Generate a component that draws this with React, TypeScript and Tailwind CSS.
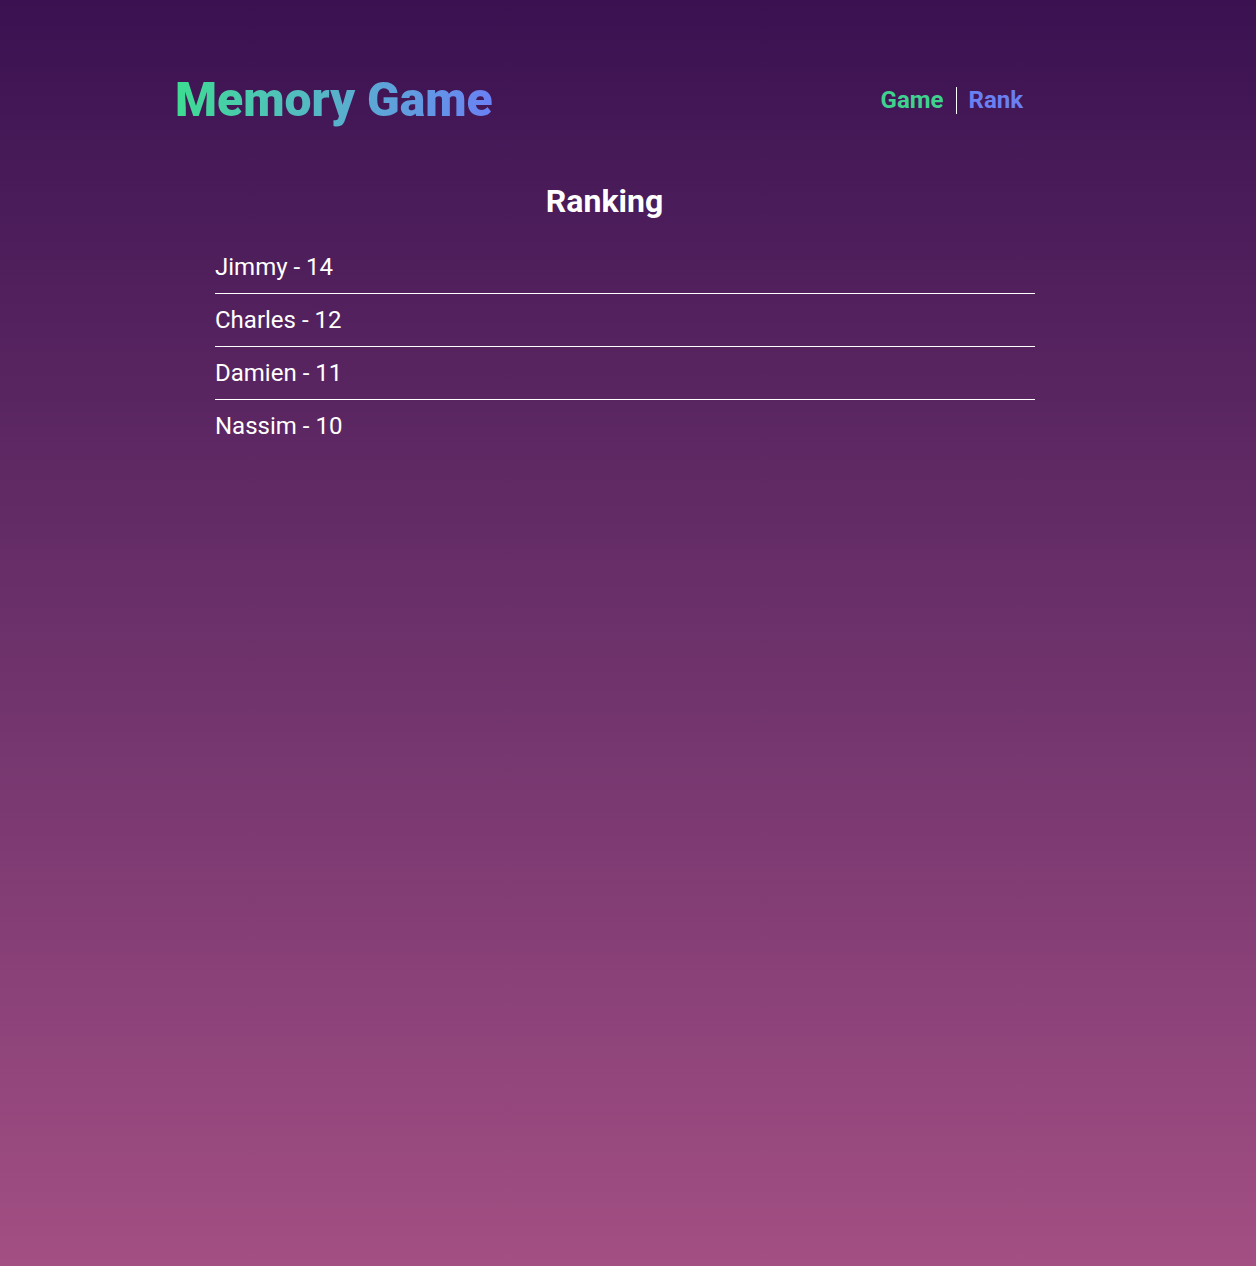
const scores = [
  { name: "Jimmy", score: 14 },
  { name: "Charles", score: 12 },
  { name: "Damien", score: 11 },
  { name: "Nassim", score: 10 },
];

export default function App() {
  return (
    <div
      className="min-h-[1266px] w-full bg-gradient-to-b from-[#3b1151] to-[#a34f83] text-white"
      style={{ fontFamily: "Roboto, 'Liberation Sans', sans-serif" }}
    >
      {/* Header */}
      <header className="flex items-center justify-between pl-[175px] pr-[233px] pt-[72px]">
        <h1 className="bg-gradient-to-r from-[#3ddc91] to-[#6a80f5] bg-clip-text text-[48px] font-black leading-[56px] text-transparent">
          Memory Game
        </h1>
        <nav className="flex items-center text-[24px] font-bold leading-[28px]">
          <a className="pr-3 text-[#3fd28f]">Game</a>
          <span className="h-[27px] w-px bg-white" />
          <a className="pl-3 text-[#6a80f2]">Rank</a>
        </nav>
      </header>

      {/* Ranking */}
      <main className="mx-auto mt-[54px] w-[820px] -translate-x-[3px]">
        <h2 className="-ml-[41px] text-center text-[32px] font-bold leading-[38px]">Ranking</h2>
        <ul className="mt-[21px]">
          {scores.map((s, i) => (
            <li
              key={s.name}
              className={
                i < scores.length - 1
                  ? "border-b border-white py-[10px] text-[24px] leading-[32px]"
                  : "py-[10px] text-[24px] leading-[32px]"
              }
            >
              {s.name} - {s.score}
            </li>
          ))}
        </ul>
      </main>
    </div>
  );
}
